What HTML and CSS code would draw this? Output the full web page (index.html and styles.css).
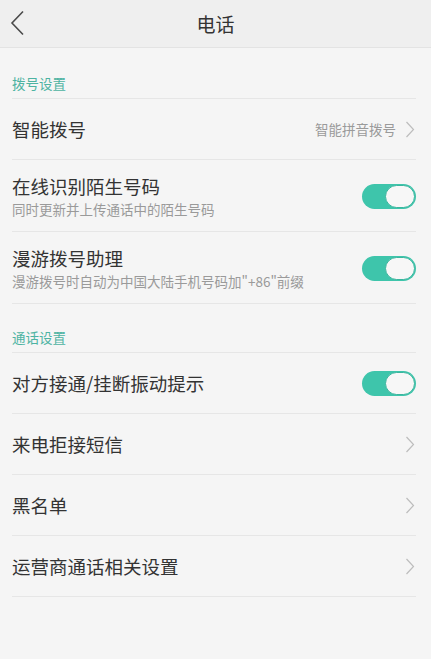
FILE: index.html
```html
<!DOCTYPE html>
<html lang="zh-CN">
<head>
<meta charset="utf-8">
<title>电话</title>
<link rel="stylesheet" href="styles.css">
</head>
<body>
<div class="app">
  <header class="topbar">
    <svg class="back" width="16" height="26" viewBox="0 0 16 26"><polyline points="13,1.5 2,13 13,24.5" fill="none" stroke="#4a4a4a" stroke-width="1.6"/></svg>
    <div class="title">电话</div>
  </header>
  <main class="content">
    <div class="section section-first">拨号设置</div>
    <div class="row">
      <div class="label">智能拨号</div>
      <div class="value">智能拼音拨号</div>
      <svg class="chev" width="10" height="17" viewBox="0 0 10 17"><polyline points="1.5,1 8.5,8.5 1.5,16" fill="none" stroke="#bdbdbd" stroke-width="1.2"/></svg>
    </div>
    <div class="row row-2">
      <div class="texts">
        <div class="label">在线识别陌生号码</div>
        <div class="sub">同时更新并上传通话中的陌生号码</div>
      </div>
      <div class="toggle"><span class="knob"></span></div>
    </div>
    <div class="row row-2">
      <div class="texts">
        <div class="label">漫游拨号助理</div>
        <div class="sub">漫游拨号时自动为中国大陆手机号码加"+86"前缀</div>
      </div>
      <div class="toggle"><span class="knob"></span></div>
    </div>
    <div class="section">通话设置</div>
    <div class="row">
      <div class="label">对方接通/挂断振动提示</div>
      <div class="toggle"><span class="knob"></span></div>
    </div>
    <div class="row">
      <div class="label">来电拒接短信</div>
      <svg class="chev" width="10" height="17" viewBox="0 0 10 17"><polyline points="1.5,1 8.5,8.5 1.5,16" fill="none" stroke="#bdbdbd" stroke-width="1.2"/></svg>
    </div>
    <div class="row">
      <div class="label">黑名单</div>
      <svg class="chev" width="10" height="17" viewBox="0 0 10 17"><polyline points="1.5,1 8.5,8.5 1.5,16" fill="none" stroke="#bdbdbd" stroke-width="1.2"/></svg>
    </div>
    <div class="row">
      <div class="label">运营商通话相关设置</div>
      <svg class="chev" width="10" height="17" viewBox="0 0 10 17"><polyline points="1.5,1 8.5,8.5 1.5,16" fill="none" stroke="#bdbdbd" stroke-width="1.2"/></svg>
    </div>
  </main>
</div>
</body>
</html>
```
FILE: styles.css
```css
html, body {
  margin: 0;
  padding: 0;
  background: #f5f5f5;
}
body {
  font-family: "Noto Sans CJK SC", "Noto Sans", sans-serif;
  color: #333;
}
.app {
  width: 431px;
  min-height: 659px;
  background: #f5f5f5;
}
.topbar {
  height: 47px;
  background: #efefef;
  border-bottom: 1px solid #e3e3e3;
  display: flex;
  align-items: center;
  justify-content: center;
  position: relative;
}
.back {
  position: absolute;
  left: 10px;
  top: 10px;
}
.title {
  font-size: 19px;
  color: #333;
  line-height: 24px;
}
.content {
  padding: 0 15px 0 12px;
}
.section {
  font-size: 13.5px;
  line-height: 16px;
  color: #4db3a2;
  padding: 25px 0 7px;
  border-bottom: 1px solid #e6e6e6;
}
.section-first {
  padding-top: 27px;
}
.row {
  height: 60px;
  border-bottom: 1px solid #e6e6e6;
  display: flex;
  align-items: center;
}
.row-2 {
  box-sizing: border-box;
  height: 72px;
  padding-top: 1px;
}
.label {
  font-size: 18.5px;
  line-height: 24px;
  color: #333;
  flex: 1;
  white-space: nowrap;
}
.texts {
  flex: 1;
  display: flex;
  flex-direction: column;
}
.sub {
  font-size: 13.5px;
  line-height: 18px;
  color: #9a9a9a;
  margin-top: 2px;
  white-space: nowrap;
}
.value {
  font-size: 13.5px;
  color: #9a9a9a;
  margin-right: 9px;
}
.chev {
  margin-right: 1px;
}
.toggle {
  width: 54px;
  height: 25px;
  border-radius: 13px;
  background: #3ec5ab;
  display: flex;
  align-items: center;
  justify-content: flex-end;
  padding: 0 1px;
  box-sizing: border-box;
}
.knob {
  width: 30px;
  height: 23px;
  border-radius: 12px;
  background: #f7f7f7;
  border: 1px solid #3ab59e;
  box-sizing: border-box;
}
```
